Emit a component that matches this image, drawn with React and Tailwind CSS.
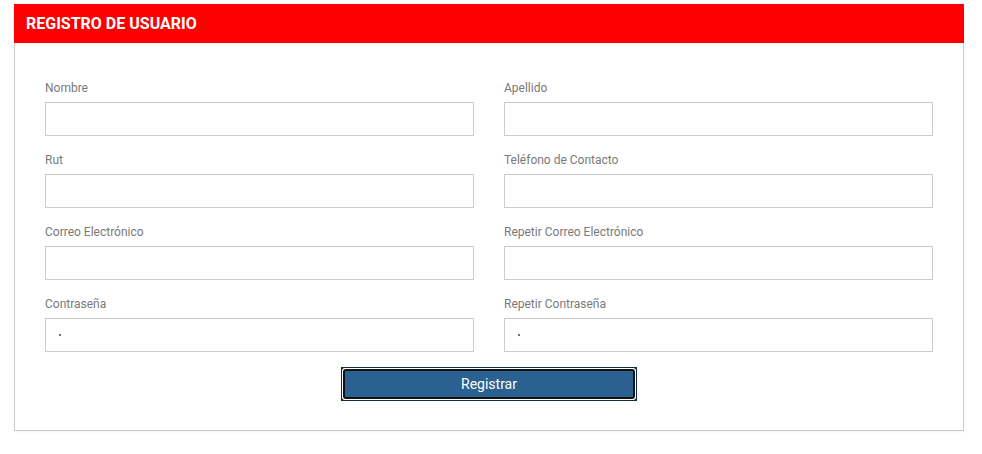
import React from "react";

const fields = [
  ["Nombre", "Apellido"],
  ["Rut", "Teléfono de Contacto"],
  ["Correo Electrónico", "Repetir Correo Electrónico"],
  ["Contraseña", "Repetir Contraseña"],
];

function Field({ label, dot }) {
  return (
    <div className="flex flex-col">
      <label className="h-[20px] leading-[20px] text-[12px] text-[#7a7a7a] mb-[4px]">{label}</label>
      <div className="h-[34px] border border-[#cccccc] bg-white flex items-center pl-[13px]">
        {dot ? <span className="block w-[2px] h-[2px] rounded-full bg-[#444]" /> : null}
      </div>
    </div>
  );
}

export default function App() {
  return (
    <div className="w-[982px] h-[454px] bg-white pt-[4px] pl-[14px]" style={{ fontFamily: "Roboto, 'Liberation Sans', sans-serif" }}>
      <div className="w-[950px] shadow-[0_1px_2px_rgba(0,0,0,0.06)]">
        <div className="h-[39px] bg-[#ff0000] flex items-center pl-[12px]">
          <h1 className="text-white font-bold text-[16px]">REGISTRO DE USUARIO</h1>
        </div>
        <div className="border border-t-0 border-[#cccccc] px-[30px] pt-[35px] pb-[29px]">
          <div className="grid grid-cols-2 gap-x-[30px] gap-y-[14px]">
            {fields.map(([a, b], i) => (
              <React.Fragment key={i}>
                <Field label={a} dot={i === 3} />
                <Field label={b} dot={i === 3} />
              </React.Fragment>
            ))}
          </div>
          <div className="flex justify-center mt-[15px]">
            <div className="w-[296px] h-[34px] bg-[#0f2c44] p-[1px]">
              <div className="w-full h-full rounded-[3px] bg-white p-[1px]">
                <button className="w-full h-full rounded-[3px] border-2 border-[#111] bg-[#2a6190] text-white text-[14px] flex items-center justify-center">
                  Registrar
                </button>
              </div>
            </div>
          </div>
        </div>
      </div>
    </div>
  );
}
